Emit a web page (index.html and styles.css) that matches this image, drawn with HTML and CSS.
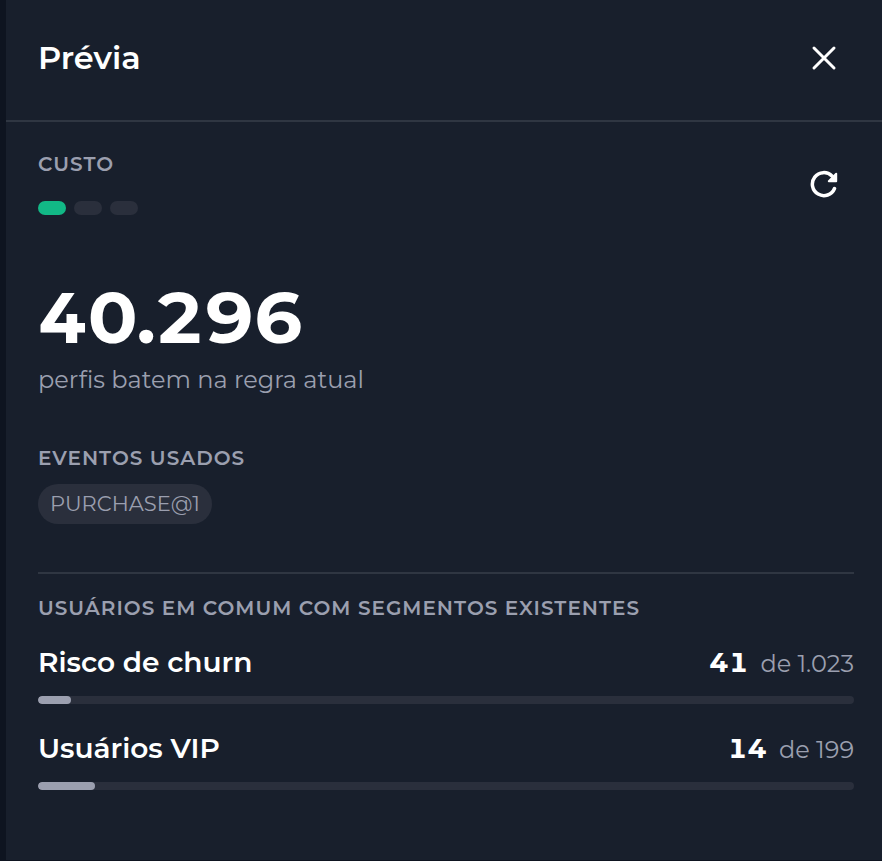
FILE: index.html
```html
<!DOCTYPE html>
<html lang="pt-BR">
<head>
    <meta charset="UTF-8">
    <meta name="viewport" content="width=device-width, initial-scale=1">
    <title>Prévia</title>
    <link rel="stylesheet" href="styles.css">
</head>
<body>
    <aside class="preview">
        <header class="preview-header">
            <h1 class="preview-title">Prévia</h1>
            <button type="button" class="icon-button" aria-label="Fechar">
                <svg width="28" height="28" viewBox="0 0 28 28" fill="none" stroke="currentColor" stroke-width="3" stroke-linecap="round">
                    <path d="M4 4 24 24M24 4 4 24"/>
                </svg>
            </button>
        </header>

        <div class="preview-body">
            <section class="cost">
                <div>
                    <h2 class="label">CUSTO</h2>
                    <div class="cost-level">
                        <span class="level level-on"></span>
                        <span class="level"></span>
                        <span class="level"></span>
                    </div>
                </div>
                <button type="button" class="icon-button" aria-label="Atualizar">
                    <svg width="28" height="28" viewBox="0 0 28 28" fill="none" stroke="currentColor" stroke-linecap="round" stroke-linejoin="round">
                        <path stroke-width="3.500" d="M24.500 18.500A11.500 11.500 0 1 1 22 6"/>
                        <path stroke-width="2" fill="currentColor" d="M26.200 3.800V11.200H18.800Z"/>
                    </svg>
                </button>
            </section>

            <section class="total">
                <p class="total-number">40.296</p>
                <p class="total-text">perfis batem na regra atual</p>
            </section>

            <section class="events">
                <h2 class="label">EVENTOS USADOS</h2>
                <span class="chip">PURCHASE@1</span>
            </section>

            <section class="segments">
                <h2 class="label">USUÁRIOS EM COMUM COM SEGMENTOS EXISTENTES</h2>
                <div class="segment">
                    <div class="segment-row">
                        <h3 class="segment-name">Risco de churn</h3>
                        <p class="segment-count"><strong>41</strong><span>de 1.023</span></p>
                    </div>
                    <div class="bar"><div class="bar-fill" style="width: 4%"></div></div>
                </div>
                <div class="segment">
                    <div class="segment-row">
                        <h3 class="segment-name">Usuários VIP</h3>
                        <p class="segment-count"><strong>14</strong><span>de 199</span></p>
                    </div>
                    <div class="bar"><div class="bar-fill" style="width: 7%"></div></div>
                </div>
            </section>
        </div>
    </aside>
</body>
</html>
```
FILE: styles.css
```css
* {
    box-sizing: border-box;
}

body {
    margin: 0;
    padding-left: 6px;
    background: #0e1420;
    color: #fff;
    font-family: Montserrat, Inter, sans-serif;
}

h1, h2, h3, p {
    margin: 0;
}

.preview {
    min-height: 100vh;
    background: #181f2c;
    border-bottom: 1px solid #0e1420;
}

.preview-header {
    display: flex;
    justify-content: space-between;
    align-items: center;
    padding: 38px 44px 42px 32px;
    border-bottom: 2px solid #2f3642;
}

.preview-title {
    font-size: 32px;
    line-height: 40px;
    font-weight: 600;
}

.icon-button {
    display: flex;
    padding: 0;
    border: none;
    background: none;
    color: #fff;
    cursor: pointer;
}

.preview-body {
    padding: 30px 28px 70px 32px;
}

.label {
    font-size: 20px;
    line-height: 24px;
    font-weight: 600;
    letter-spacing: 1px;
    color: #9b9faf;
}

.cost {
    display: flex;
    justify-content: space-between;
    align-items: center;
    padding-right: 16px;
}

.cost-level {
    display: flex;
    gap: 8px;
    margin-top: 25px;
}

.level {
    width: 28px;
    height: 14px;
    border-radius: 7px;
    background: #2a2f3c;
}

.level-on {
    background: #12b886;
}

.total {
    margin-top: 62px;
}

.total-number {
    font-size: 72px;
    line-height: 80px;
    font-weight: 700;
    font-variant-numeric: tabular-nums;
    letter-spacing: -1px;
}

.total-text {
    margin-top: 7px;
    font-size: 24px;
    line-height: 32px;
    font-weight: 400;
    color: #9b9faf;
}

.events {
    margin-top: 50px;
}

.chip {
    display: block;
    width: fit-content;
    margin-top: 14px;
    padding: 0 12px;
    border-radius: 20px;
    background: #2a2f3c;
    color: #9b9faf;
    font-size: 21px;
    line-height: 40px;
}

.segments {
    margin-top: 48px;
    padding-top: 22px;
    border-top: 2px solid #2f3642;
}

.segment {
    margin-top: 26px;
}

.label + .segment {
    margin-top: 24px;
}

.segment-row {
    display: flex;
    justify-content: space-between;
    align-items: baseline;
    line-height: 36px;
}

.segment-name {
    font-size: 28px;
    font-weight: 600;
}

.segment-count {
    display: flex;
    align-items: baseline;
    gap: 12px;
    font-size: 24px;
    font-weight: 400;
    color: #9b9faf;
}

.segment-count strong {
    font-size: 28px;
    font-weight: 700;
    font-variant-numeric: tabular-nums;
    color: #fff;
}

.bar {
    height: 8px;
    margin-top: 14px;
    border-radius: 4px;
    background: #2a2f3c;
    overflow: hidden;
}

.bar-fill {
    height: 100%;
    border-radius: 4px;
    background: #9b9faf;
}
```
